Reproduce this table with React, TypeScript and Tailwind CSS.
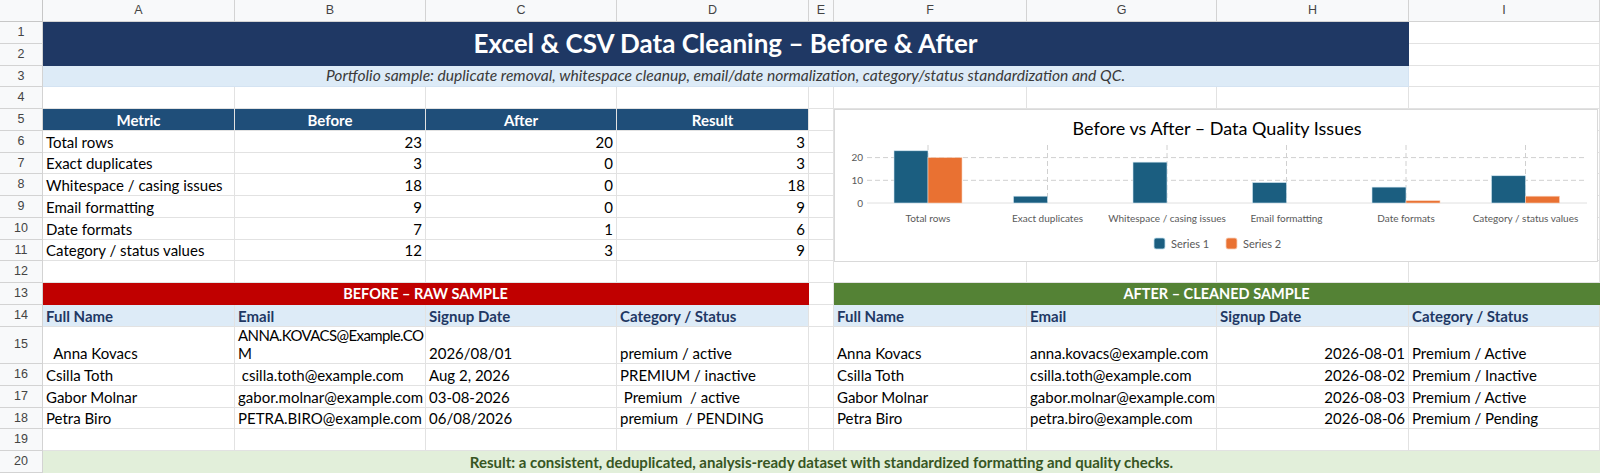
import React from 'react';

const letters = ['A', 'B', 'C', 'D', 'E', 'F', 'G', 'H', 'I'];

const metrics: [string, number, number, number][] = [
  ['Total rows', 23, 20, 3],
  ['Exact duplicates', 3, 0, 3],
  ['Whitespace / casing issues', 18, 0, 18],
  ['Email formatting', 9, 0, 9],
  ['Date formats', 7, 1, 6],
  ['Category / status values', 12, 3, 9],
];

const raw: [string, React.ReactNode, string, string][] = [
  ['  Anna Kovacs', <span className="tracking-[-0.6px]">ANNA.KOVACS@Example.CO<br />M</span>, '2026/08/01', 'premium / active'],
  ['Csilla Toth', ' csilla.toth@example.com', 'Aug 2, 2026', 'PREMIUM / inactive'],
  ['Gabor Molnar', 'gabor.molnar@example.com', '03-08-2026', ' Premium  / active'],
  ['Petra Biro', 'PETRA.BIRO@example.com', '06/08/2026', 'premium  / PENDING'],
];

const clean: [string, string, string, string][] = [
  ['Anna Kovacs', 'anna.kovacs@example.com', '2026-08-01', 'Premium / Active'],
  ['Csilla Toth', 'csilla.toth@example.com', '2026-08-02', 'Premium / Inactive'],
  ['Gabor Molnar', 'gabor.molnar@example.com', '2026-08-03', 'Premium / Active'],
  ['Petra Biro', 'petra.biro@example.com', '2026-08-06', 'Premium / Pending'],
];

const Cell = ({ children, className = '' }: { children?: React.ReactNode; className?: string }) => (
  <div className={`flex items-end overflow-hidden whitespace-pre border-b border-r border-[#e2e2e2] px-[3px] pb-[1px] leading-[18px] ${className}`}>
    {children}
  </div>
);

const RowNum = ({ n }: { n: number }) => (
  <div className="flex items-center justify-center border-b border-r border-[#d3d3d3] bg-[#f8f9fa] font-['Liberation_Sans',Arial,sans-serif] text-[12.5px] text-[#444]">
    {n}
  </div>
);

const Blanks = ({ count }: { count: number }) => (
  <>
    {Array.from({ length: count }).map((_, i) => (
      <Cell key={i} />
    ))}
  </>
);

const Chart = () => {
  const before = [23, 3, 18, 9, 7, 12];
  const after = [20, 0, 0, 0, 1, 3];
  const labels = ['Total rows', 'Exact duplicates', 'Whitespace / casing issues', 'Email formatting', 'Date formats', 'Category / status values'];
  const base = 93;
  const unit = 2.27;
  const cx = (i: number) => 93 + 119.5 * i;

  return (
    <div className="absolute left-[834px] top-[109px] h-[153px] w-[764px] border border-[#d9d9d9] bg-white">
      <svg width="762" height="151" className="font-['Lato',sans-serif]">
        <text x="382" y="25" textAnchor="middle" fontSize="18" fill="#000">
          Before vs After – Data Quality Issues
        </text>
        {[20, 10].map((v) => (
          <line key={v} x1="32" x2="752" y1={base - v * unit} y2={base - v * unit} stroke="#d0d0d0" strokeDasharray="5 3" />
        ))}
        {labels.map((_, i) => (
          <line key={i} x1={cx(i)} x2={cx(i)} y1="35" y2={base} stroke="#d0d0d0" strokeDasharray="5 3" />
        ))}
        <line x1="32" x2="752" y1={base} y2={base} stroke="#e0e0e0" />
        {[20, 10, 0].map((v) => (
          <text key={v} x="28" y={base - v * unit + 3.5} textAnchor="end" fontSize="10" fill="#595959">
            {v}
          </text>
        ))}
        {before.map((v, i) => (
          <rect key={`b${i}`} x={cx(i) - 34} y={base - v * unit} width="34" height={v * unit} fill="#1b5e80" stroke="#cfe5f1" strokeWidth="0.6" />
        ))}
        {after.map((v, i) =>
          v > 0 ? (
            <rect key={`a${i}`} x={cx(i)} y={base - v * unit} width="34" height={v * unit} fill="#e97132" stroke="#f8d2bb" strokeWidth="0.6" />
          ) : null
        )}
        {labels.map((l, i) => (
          <text key={l} x={cx(i)} y="111.5" textAnchor="middle" fontSize="10" fill="#595959">
            {l}
          </text>
        ))}
        <rect x="319" y="128" width="11" height="11" rx="2" fill="#1b5e80" stroke="#bfe0ef" strokeWidth="0.8" />
        <text x="336" y="137.5" fontSize="11" fill="#595959">Series 1</text>
        <rect x="391" y="128" width="11" height="11" rx="2" fill="#e97132" stroke="#f8d2bb" strokeWidth="0.8" />
        <text x="408" y="137.5" fontSize="11" fill="#595959">Series 2</text>
      </svg>
    </div>
  );
};

export default function App() {
  return (
    <div className="relative h-[473px] w-[1600px] overflow-hidden bg-white">
      <div className="grid grid-cols-[43px_192px_191px_191px_192px_25px_193px_190px_192px_191px] grid-rows-[22px_repeat(14,21.75px)_37.5px_repeat(5,21.75px)] font-['Lato',sans-serif] text-[15px] text-black">
        {/* column header */}
        <div className="border-b border-r border-[#c7c7c7] bg-[#f8f9fa]" />
        {letters.map((l) => (
          <div key={l} className="flex items-center justify-center border-b border-r border-[#d3d3d3] bg-[#f8f9fa] font-['Liberation_Sans',Arial,sans-serif] text-[12.5px] text-[#444]">
            {l}
          </div>
        ))}

        {/* rows 1-2 title */}
        <RowNum n={1} />
        <div className="col-span-8 row-span-2 flex items-center justify-center border-b border-r border-[#1f3864] bg-[#1f3864] text-[26px] font-bold text-white">
          Excel &amp; CSV Data Cleaning – Before &amp; After
        </div>
        <Cell />
        <RowNum n={2} />
        <Cell />

        {/* row 3 */}
        <RowNum n={3} />
        <div className="col-span-8 flex items-center justify-center border-b border-r border-[#d4e3f2] bg-[#ddebf7] text-[15.6px] italic text-[#3a3a3a]">
          Portfolio sample: duplicate removal, whitespace cleanup, email/date normalization, category/status standardization and QC.
        </div>
        <Cell />

        {/* row 4 */}
        <RowNum n={4} />
        <Blanks count={9} />

        {/* row 5 */}
        <RowNum n={5} />
        {['Metric', 'Before', 'After', 'Result'].map((h) => (
          <Cell key={h} className="justify-center border-[#1f4e79] bg-[#1f4e79] font-bold text-white">
            {h}
          </Cell>
        ))}
        <Blanks count={5} />

        {/* rows 6-11 */}
        {metrics.map(([name, b, a, r], i) => (
          <React.Fragment key={name}>
            <RowNum n={6 + i} />
            <Cell>{name}</Cell>
            <Cell className="justify-end">{b}</Cell>
            <Cell className="justify-end">{a}</Cell>
            <Cell className="justify-end">{r}</Cell>
            <Blanks count={5} />
          </React.Fragment>
        ))}

        {/* row 12 */}
        <RowNum n={12} />
        <Blanks count={9} />

        {/* row 13 */}
        <RowNum n={13} />
        <div className="col-span-4 flex items-center justify-center border-b border-r border-[#c00000] bg-[#c00000] text-[14.5px] font-bold text-white">
          BEFORE – RAW SAMPLE
        </div>
        <Cell />
        <div className="col-span-4 flex items-center justify-center border-b border-r border-[#548235] bg-[#548235] text-[14.5px] font-bold text-white">
          AFTER – CLEANED SAMPLE
        </div>

        {/* row 14 */}
        <RowNum n={14} />
        {['Full Name', 'Email', 'Signup Date', 'Category / Status'].map((h) => (
          <Cell key={`l${h}`} className="border-[#d3e2f1] bg-[#ddebf7] font-bold text-[#1f3864]">
            {h}
          </Cell>
        ))}
        <Cell />
        {['Full Name', 'Email', 'Signup Date', 'Category / Status'].map((h) => (
          <Cell key={`r${h}`} className="border-[#d3e2f1] bg-[#ddebf7] font-bold text-[#1f3864]">
            {h}
          </Cell>
        ))}

        {/* rows 15-18 */}
        {raw.map((row, i) => (
          <React.Fragment key={i}>
            <RowNum n={15 + i} />
            <Cell>{row[0]}</Cell>
            <Cell className="pr-0">{row[1]}</Cell>
            <Cell>{row[2]}</Cell>
            <Cell>{row[3]}</Cell>
            <Cell />
            <Cell>{clean[i][0]}</Cell>
            <Cell>{clean[i][1]}</Cell>
            <Cell className="justify-end">{clean[i][2]}</Cell>
            <Cell>{clean[i][3]}</Cell>
          </React.Fragment>
        ))}

        {/* row 19 */}
        <RowNum n={19} />
        <Blanks count={9} />

        {/* row 20 */}
        <RowNum n={20} />
        <div className="col-span-9 flex items-center justify-center bg-[#e2efda] text-[15px] font-bold text-[#375623]">
          Result: a consistent, deduplicated, analysis-ready dataset with standardized formatting and quality checks.
        </div>
      </div>

      <Chart />
    </div>
  );
}
